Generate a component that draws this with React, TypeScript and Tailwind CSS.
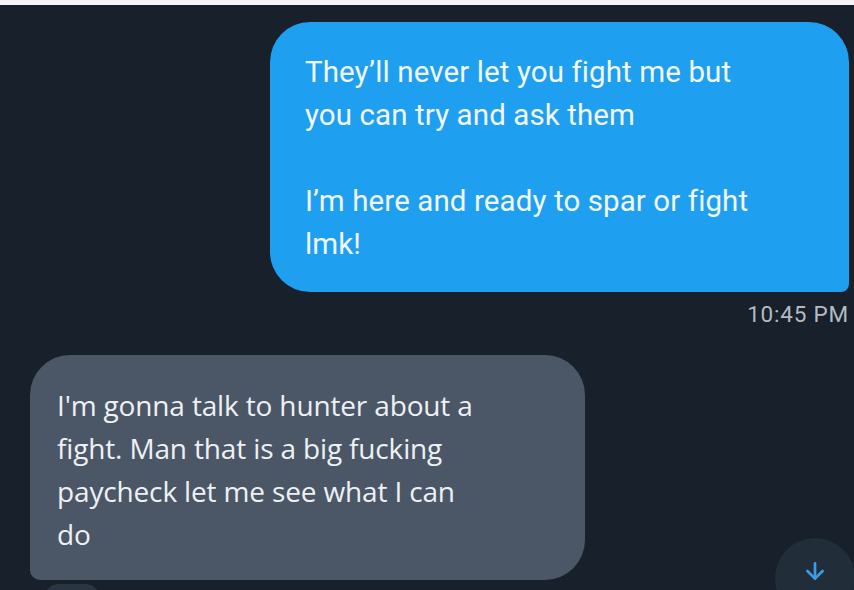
import { ArrowDown } from "lucide-react";

const App = () => {
  return (
    <main className="relative w-[854px] h-[590px] overflow-hidden bg-[#17202b] font-['Roboto',sans-serif] text-white">
      <div className="h-[5px] bg-[#f4f4f4]" />

      <section className="flex flex-col items-end pt-[17px] pr-[5px]">
        <div className="w-[579px] bg-[#1f9ff0] rounded-[40px] rounded-br-[8px] pl-[35px] pr-[20px] pt-[29px] pb-[26px] text-[29.5px] leading-[43px] tracking-[0.1px] text-[#f1f7fb]">
          <p>They’ll never let you fight me but</p>
          <p>you can try and ask them</p>
          <p className="h-[43px]" />
          <p>I’m here and ready to spar or fight</p>
          <p>lmk!</p>
        </div>
        <p className="mt-[9px] text-[22.5px] leading-[26px] tracking-[0.8px] text-[#b3bbc5]">
          10:45 PM
        </p>
      </section>

      <section className="pl-[30px] pt-[28px]">
        <div className="w-[555px] bg-[#4b5767] rounded-[40px] rounded-bl-[10px] pl-[27px] pr-[20px] pt-[29px] pb-[24px] text-[28px] leading-[43px] font-['Open_Sans',sans-serif] tracking-[-0.15px] text-[#eef1f4]">
          <p>I'm gonna talk to hunter about a</p>
          <p>fight. Man that is a big fucking</p>
          <p>paycheck let me see what I can</p>
          <p>do</p>
        </div>
        <div className="mt-[4px] ml-[14px] w-[56px] h-[30px] rounded-full bg-[#2a3542]" />
      </section>

      <button className="absolute left-[775px] top-[538px] w-[80px] h-[80px] rounded-full bg-[#222d3a] flex justify-center pt-[20px]">
        <ArrowDown className="w-[26px] h-[26px] text-[#3a9be6]" strokeWidth={2.5} />
      </button>
    </main>
  );
};

export default App;
